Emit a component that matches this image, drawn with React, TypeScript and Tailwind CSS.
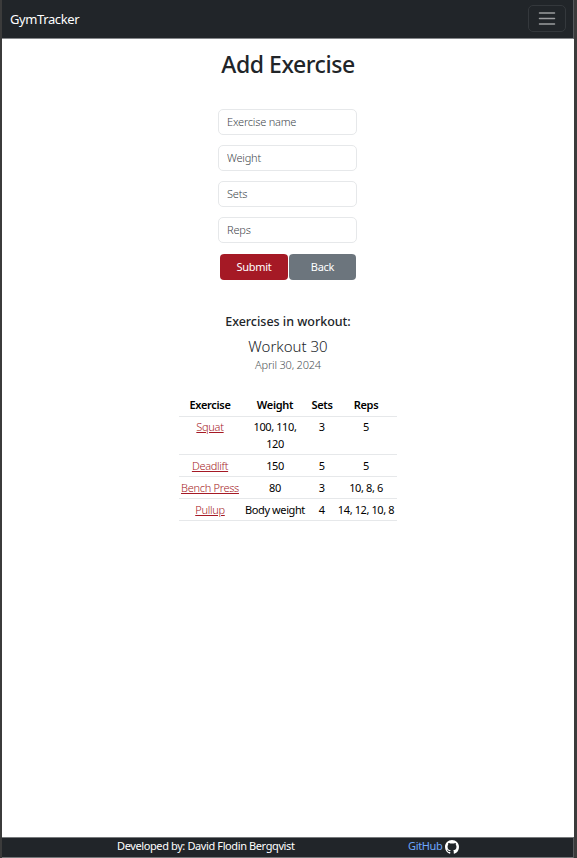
import React from "react";

const fields = ["Exercise name", "Weight", "Sets", "Reps"];

const rows = [
  { name: "Squat", weight: "100, 110, 120", sets: "3", reps: "5", height: "h-[38px]", pad: "pt-px" },
  { name: "Deadlift", weight: "150", sets: "5", reps: "5", height: "h-[22px]", pad: "pt-[2px]" },
  { name: "Bench Press", weight: "80", sets: "3", reps: "10, 8, 6", height: "h-[22px]", pad: "pt-[2px]" },
  { name: "Pullup", weight: "Body weight", sets: "4", reps: "14, 12, 10, 8", height: "h-[22px]", pad: "pt-[2px]" },
];

function Navbar() {
  return (
    <nav className="flex h-[39px] shrink-0 items-center justify-between border-b border-r border-[#85878a] border-r-[#55585b] bg-[#212529] pl-2 pr-[7px]">
      <span className="pt-px text-[13px] tracking-[-0.4px] text-white">GymTracker</span>
      <button aria-label="Toggle navigation" className="mb-px flex h-[27px] w-[38px] items-center justify-center rounded-[5px] border border-[#34383c]">
        <svg width="18" height="15" viewBox="0 0 18 15" stroke="#9b9d9f" strokeWidth="1.5" strokeLinecap="round">
          <path d="M1.5 2h15M1.5 7.5h15M1.5 13h15" />
        </svg>
      </button>
    </nav>
  );
}

function ExerciseTable() {
  return (
    <table className="mt-[21px] w-[218px] table-fixed border-collapse text-center text-[11px] leading-[17px] text-black">
      <colgroup>
        <col className="w-[62px]" />
        <col className="w-[68px]" />
        <col className="w-[26px]" />
        <col className="w-[62px]" />
      </colgroup>
      <thead>
        <tr className="h-[22px] border-b border-[#e6e8ea] tracking-[-0.3px]">
          <th className="font-semibold">Exercise</th>
          <th className="font-semibold">Weight</th>
          <th className="font-semibold">Sets</th>
          <th className="font-semibold">Reps</th>
        </tr>
      </thead>
      <tbody>
        {rows.map((r) => (
          <tr key={r.name} className={`${r.height} border-b border-[#e6e8ea] align-top`}>
            <td className={`whitespace-nowrap ${r.pad}`}>
              <a href="#" className="font-light tracking-[-0.3px] text-[#a51925] underline underline-offset-1">{r.name}</a>
            </td>
            <td className={`px-[3px] tracking-[-0.4px] ${r.pad}`}>{r.weight}</td>
            <td className={r.pad}>{r.sets}</td>
            <td className={`whitespace-nowrap tracking-[-0.4px] ${r.pad}`}>{r.reps}</td>
          </tr>
        ))}
      </tbody>
    </table>
  );
}

function Footer() {
  return (
    <footer className="flex h-[21px] shrink-0 items-center border-y border-r border-[#77797b] border-r-[#55585b] bg-[#212529] pb-[3px] pl-[115px] text-[11px] leading-4">
      <span className="w-[291px] whitespace-nowrap tracking-[-0.39px] text-white">Developed by: David Flodin Bergqvist</span>
      <a href="#" className="flex items-center gap-[3px] tracking-[-0.35px] text-[#6ea8fe]">
        GitHub
        <svg width="14" height="14" viewBox="0 0 16 16" fill="white" className="relative top-px">
          <path d="M8 0C3.58 0 0 3.58 0 8c0 3.54 2.29 6.53 5.47 7.59.4.07.55-.17.55-.38 0-.19-.01-.82-.01-1.49-2.01.37-2.53-.49-2.69-.94-.09-.23-.48-.94-.82-1.13-.28-.15-.68-.52-.01-.53.63-.01 1.08.58 1.23.82.72 1.21 1.87.87 2.33.66.07-.52.28-.87.51-1.07-1.78-.2-3.64-.89-3.64-3.95 0-.87.31-1.59.82-2.15-.08-.2-.36-1.02.08-2.12 0 0 .67-.21 2.2.82A7.7 7.7 0 0 1 8 3.86c.68 0 1.36.09 2 .27 1.53-1.04 2.2-.82 2.2-.82.44 1.1.16 1.92.08 2.12.51.56.82 1.27.82 2.15 0 3.07-1.87 3.75-3.65 3.95.29.25.54.73.54 1.48 0 1.07-.01 1.93-.01 2.2 0 .21.15.46.55.38A8.01 8.01 0 0 0 16 8c0-4.42-3.58-8-8-8z" />
        </svg>
      </a>
    </footer>
  );
}

export default function App() {
  return (
    <div className="flex h-[858px] w-[577px] flex-col border-l-2 border-r-[3px] border-[#3b3b3b] bg-white font-['Noto_Sans','Open_Sans',sans-serif] text-[#212529]">
      <Navbar />
      <main className="flex flex-1 flex-col items-center">
        <h1 className="mt-[9px] text-[23px] font-medium leading-8 tracking-[-0.45px]">Add Exercise</h1>
        <form className="mt-[29px] flex flex-col items-center">
          <div className="mr-px flex w-[139px] flex-col gap-[10px]">
            {fields.map((f) => (
              <input key={f} placeholder={f} className="h-[26px] w-full rounded-[5px] border border-[#e6e8ea] px-2 pb-px text-[11px] font-light tracking-[-0.2px] placeholder:text-[#41474c]" />
            ))}
          </div>
          <div className="mt-[11px] flex gap-px text-[11px] tracking-[-0.3px] text-white">
            <button type="button" className="h-[26px] w-[68px] rounded-[4px] bg-[#a51925]">Submit</button>
            <button type="button" className="h-[26px] w-[67px] rounded-[4px] bg-[#6c757d]">Back</button>
          </div>
        </form>
        <h2 className="mt-[34px] text-[12.5px] font-medium leading-4 tracking-[-0.02px]">Exercises in workout:</h2>
        <p className="mt-[6px] text-[15px] font-light leading-5">Workout 30</p>
        <p className="mt-px text-[11px] font-light leading-4 tracking-[-0.2px] text-[#4b5156]">April 30, 2024</p>
        <ExerciseTable />
      </main>
      <Footer />
    </div>
  );
}
